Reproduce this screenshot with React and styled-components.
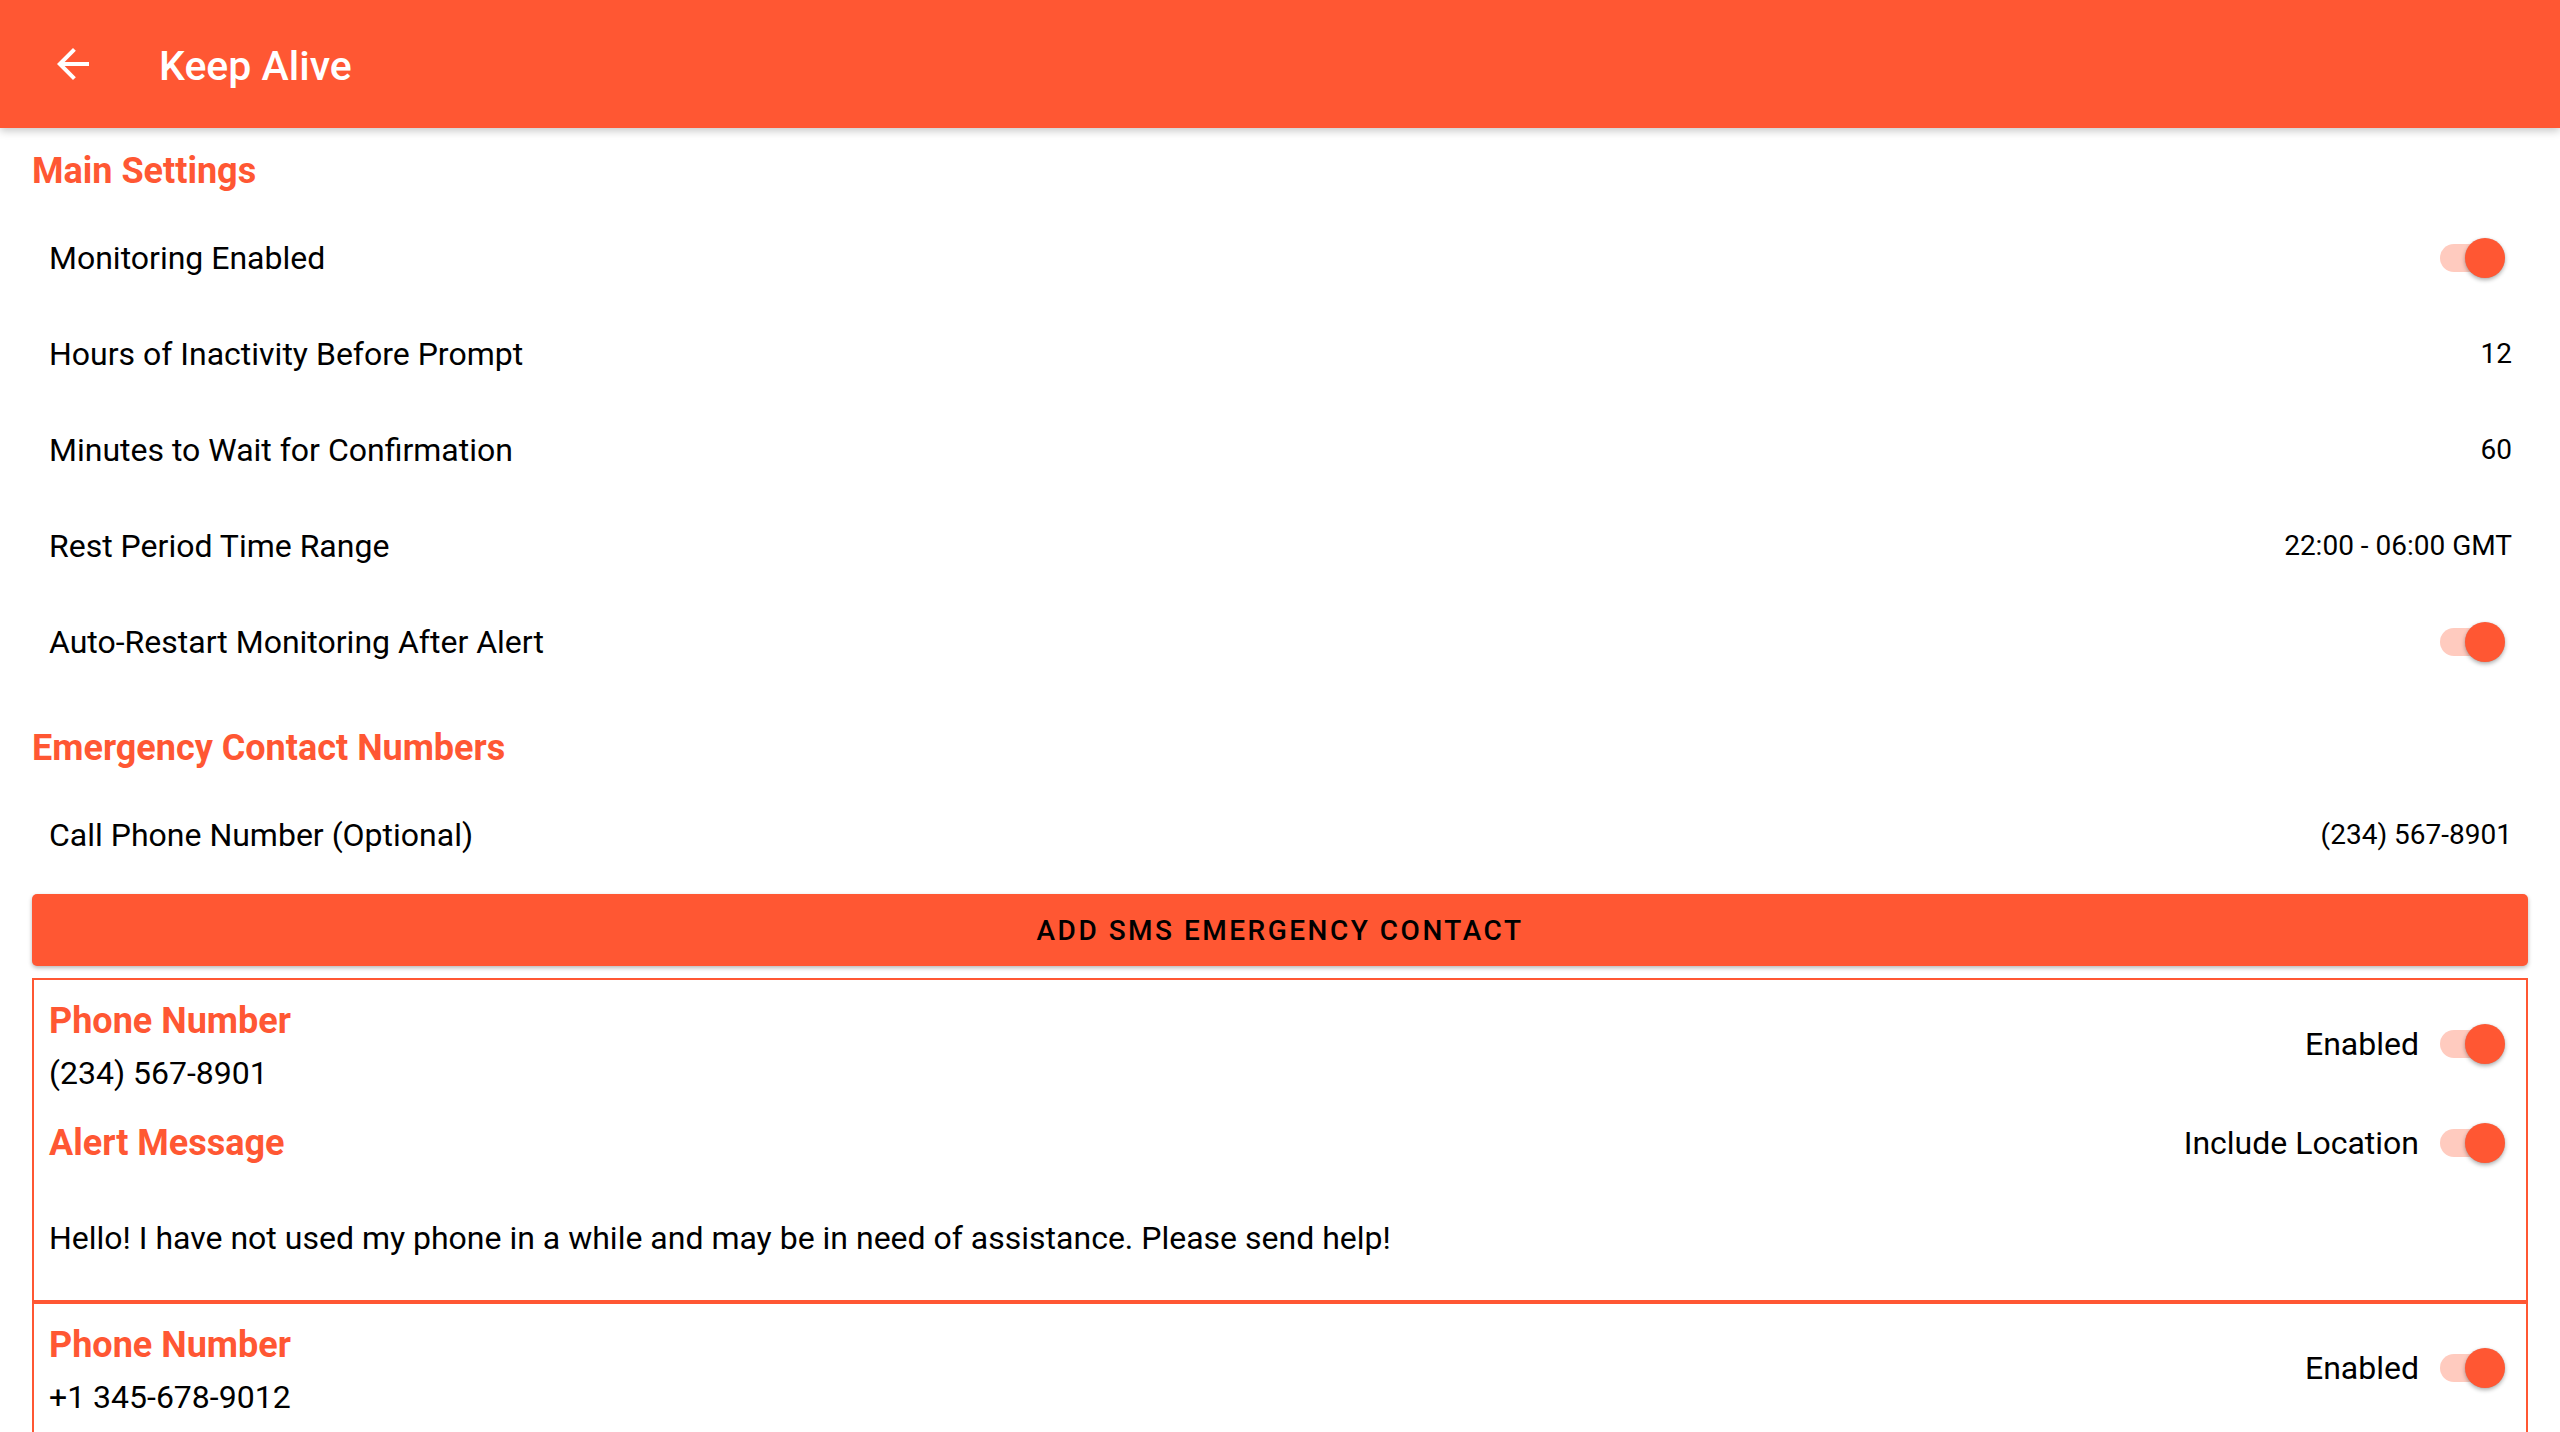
import React from "react";
import styled, { createGlobalStyle } from "styled-components";

const ORANGE = "#FF5733";

const GlobalStyle = createGlobalStyle`
  html, body {
    margin: 0;
    padding: 0;
    overflow: hidden;
    background: #ffffff;
  }
  body {
    font-family: Roboto, "Liberation Sans", sans-serif;
    color: #000;
  }
  * { box-sizing: border-box; }
`;

const Page = styled.div`
  width: 2560px;
  height: 1432px;
  display: flex;
  flex-direction: column;
  background: #fff;
  overflow: hidden;
`;

const Header = styled.header`
  position: relative;
  z-index: 2;
  flex: 0 0 128px;
  height: 128px;
  background: ${ORANGE};
  display: flex;
  align-items: center;
  box-shadow: 0 3px 8px rgba(0, 0, 0, 0.22);
`;

const BackButton = styled.button`
  margin-left: 49px;
  width: 48px;
  height: 48px;
  padding: 0;
  border: none;
  background: transparent;
  display: flex;
  align-items: center;
  justify-content: center;
  color: #fff;
  cursor: pointer;
`;

const Title = styled.h1`
  margin: 4px 0 0 62px;
  font-size: 41px;
  font-weight: 500;
  color: #fff;
  line-height: 48px;
`;

const Content = styled.main`
  flex: 1;
  padding: 11px 32px 0 32px;
  display: flex;
  flex-direction: column;
`;

const SectionTitle = styled.h2`
  margin: ${(p) => (p.$spaced ? "26px" : "0")} 0 7px 0;
  font-size: 36px;
  font-weight: 700;
  line-height: 64px;
  color: ${ORANGE};
`;

const SettingRow = styled.div`
  height: 96px;
  padding: 0 16px 0 17px;
  display: flex;
  align-items: center;
  justify-content: space-between;
`;

const Label = styled.span`
  font-size: 32px;
  line-height: 48px;
  color: #000;
`;

const Value = styled.span`
  font-size: 28px;
  line-height: 48px;
  color: #000;
`;

const SwitchBox = styled.span`
  position: relative;
  display: inline-block;
  flex: 0 0 72px;
  width: 72px;
  height: 40px;
`;

const Track = styled.span`
  position: absolute;
  left: 0;
  top: 6px;
  width: 60px;
  height: 28px;
  border-radius: 14px;
  background: ${(p) => (p.$on ? "#FFCBBF" : "#bdbdbd")};
`;

const Thumb = styled.span`
  position: absolute;
  top: 0;
  left: ${(p) => (p.$on ? "25px" : "0")};
  width: 40px;
  height: 40px;
  border-radius: 50%;
  background: ${(p) => (p.$on ? ORANGE : "#f1f1f1")};
  box-shadow: 0 2px 4px rgba(0, 0, 0, 0.32), 0 0 1px rgba(0, 0, 0, 0.12);
`;

const Switch = ({ on = true }) => (
  <SwitchBox role="switch" aria-checked={on}>
    <Track $on={on} />
    <Thumb $on={on} />
  </SwitchBox>
);

const AddButton = styled.button`
  margin-top: 11px;
  height: 72px;
  width: 100%;
  border: none;
  border-radius: 5px;
  background: ${ORANGE};
  box-shadow: 0 2px 4px rgba(0, 0, 0, 0.28);
  font-family: Roboto, "Liberation Sans", sans-serif;
  font-size: 28px;
  font-weight: 500;
  letter-spacing: 2.5px;
  color: #000;
  text-transform: uppercase;
  cursor: pointer;
`;

const CardList = styled.div`
  margin-top: 12px;
  display: flex;
  flex-direction: column;
`;

const ContactCard = styled.section`
  border: 2px solid ${ORANGE};
  padding: 15px 14px 36px 15px;
  display: flex;
  flex-direction: column;
`;

const CardTop = styled.div`
  display: flex;
  align-items: center;
  justify-content: space-between;
`;

const Stack = styled.div`
  display: flex;
  flex-direction: column;
`;

const CardTitle = styled.div`
  font-size: 36px;
  font-weight: 700;
  line-height: 52px;
  color: ${ORANGE};
`;

const CardValue = styled.div`
  font-size: 32px;
  line-height: 52px;
  color: #000;
`;

const ToggleGroup = styled.div`
  display: flex;
  align-items: center;
  gap: 21px;
  margin-bottom: ${(p) => (p.$lift ? "6px" : "0")};
`;

const AlertRow = styled.div`
  margin-top: 18px;
  height: 52px;
  display: flex;
  align-items: center;
  justify-content: space-between;
`;

const Message = styled.p`
  margin: 43px 0 0 0;
  font-size: 32px;
  line-height: 52px;
  color: #000;
`;

const BackArrow = () => (
  <svg width="48" height="48" viewBox="0 0 24 24" fill="currentColor" aria-hidden="true">
    <path d="M20 11H7.83l5.59-5.59L12 4l-8 8 8 8 1.41-1.41L7.83 13H20v-2z" />
  </svg>
);

const settings = [
  { label: "Monitoring Enabled", toggle: true },
  { label: "Hours of Inactivity Before Prompt", value: "12" },
  { label: "Minutes to Wait for Confirmation", value: "60" },
  { label: "Rest Period Time Range", value: "22:00 - 06:00 GMT" },
  { label: "Auto-Restart Monitoring After Alert", toggle: true },
];

const contacts = [
  {
    phone: "(234) 567-8901",
    message:
      "Hello! I have not used my phone in a while and may be in need of assistance. Please send help!",
  },
  {
    phone: "+1 345-678-9012",
  },
];

export default function App() {
  return (
    <>
      <GlobalStyle />
      <Page>
        <Header>
          <BackButton aria-label="Back">
            <BackArrow />
          </BackButton>
          <Title>Keep Alive</Title>
        </Header>
        <Content>
          <SectionTitle>Main Settings</SectionTitle>
          {settings.map((s) => (
            <SettingRow key={s.label}>
              <Label>{s.label}</Label>
              {s.toggle ? <Switch on /> : <Value>{s.value}</Value>}
            </SettingRow>
          ))}
          <SectionTitle $spaced>Emergency Contact Numbers</SectionTitle>
          <SettingRow>
            <Label>Call Phone Number (Optional)</Label>
            <Value>(234) 567-8901</Value>
          </SettingRow>
          <AddButton>Add SMS Emergency Contact</AddButton>
          <CardList>
            {contacts.map((c) => (
              <ContactCard key={c.phone}>
                <CardTop>
                  <Stack>
                    <CardTitle>Phone Number</CardTitle>
                    <CardValue>{c.phone}</CardValue>
                  </Stack>
                  <ToggleGroup $lift>
                    <Label>Enabled</Label>
                    <Switch on />
                  </ToggleGroup>
                </CardTop>
                {c.message && (
                  <>
                    <AlertRow>
                      <CardTitle>Alert Message</CardTitle>
                      <ToggleGroup>
                        <Label>Include Location</Label>
                        <Switch on />
                      </ToggleGroup>
                    </AlertRow>
                    <Message>{c.message}</Message>
                  </>
                )}
              </ContactCard>
            ))}
          </CardList>
        </Content>
      </Page>
    </>
  );
}
